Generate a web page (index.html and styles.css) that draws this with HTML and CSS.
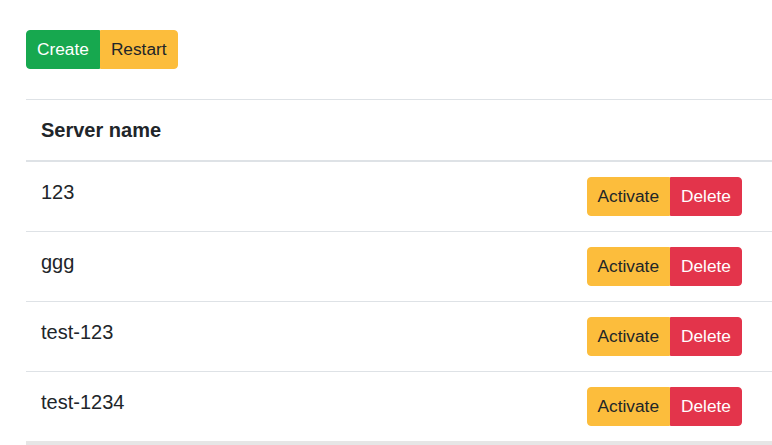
FILE: index.html
```html
<!DOCTYPE html>
<html>
<head>
<meta charset="utf-8">
<link rel="stylesheet" href="styles.css">
</head>
<body>
<div class="page">
  <div class="btn-group">
    <button class="btn btn-success">Create</button>
    <button class="btn btn-warning">Restart</button>
  </div>
  <table class="table">
    <thead>
      <tr><th>Server name</th><th></th></tr>
    </thead>
    <tbody>
      <tr>
        <td>123</td>
        <td class="actions"><div class="btn-group"><button class="btn btn-warning">Activate</button><button class="btn btn-danger">Delete</button></div></td>
      </tr>
      <tr>
        <td>ggg</td>
        <td class="actions"><div class="btn-group"><button class="btn btn-warning">Activate</button><button class="btn btn-danger">Delete</button></div></td>
      </tr>
      <tr>
        <td>test-123</td>
        <td class="actions"><div class="btn-group"><button class="btn btn-warning">Activate</button><button class="btn btn-danger">Delete</button></div></td>
      </tr>
      <tr>
        <td>test-1234</td>
        <td class="actions"><div class="btn-group"><button class="btn btn-warning">Activate</button><button class="btn btn-danger">Delete</button></div></td>
      </tr>
    </tbody>
  </table>
</div>
</body>
</html>
```

FILE: styles.css
```css
html, body {
  margin: 0;
  padding: 0;
  background: #ffffff;
  font-family: "Liberation Sans", Arial, sans-serif;
  color: #212529;
  overflow: hidden;
}
.page {
  padding: 30px 0 0 26px;
}
.btn-group {
  display: inline-flex;
  vertical-align: top;
}
.btn {
  font-family: "Liberation Sans", Arial, sans-serif;
  font-size: 17.3px;
  line-height: 25px;
  padding: 6px 10px;
  border: 1px solid transparent;
  border-radius: 0;
  cursor: pointer;
  margin: 0;
}
.btn-group .btn:first-child {
  border-top-left-radius: 4px;
  border-bottom-left-radius: 4px;
}
.btn-group .btn:last-child {
  border-top-right-radius: 4px;
  border-bottom-right-radius: 4px;
}
.btn-success {
  background: #17a84f;
  border-color: #17a84f;
  color: #ffffff;
}
.btn-warning {
  background: #fcbd3c;
  border-color: #fcbd3c;
  color: #212529;
}
.btn-danger {
  background: #e3344b;
  border-color: #e3344b;
  color: #ffffff;
}
.table {
  margin-top: 30px;
  width: 100%;
  border-collapse: collapse;
  font-size: 20px;
  line-height: 30px;
  border-bottom: 4px solid #e6e6e6;
}
.table th, .table td {
  padding: 15px;
  text-align: left;
  vertical-align: top;
  border-top: 1px solid #dee2e6;
}
.table th {
  font-weight: bold;
}
.table thead th {
  border-bottom: 2px solid #dee2e6;
}
.table td.actions {
  text-align: right;
  padding-right: 30px;
}
```
